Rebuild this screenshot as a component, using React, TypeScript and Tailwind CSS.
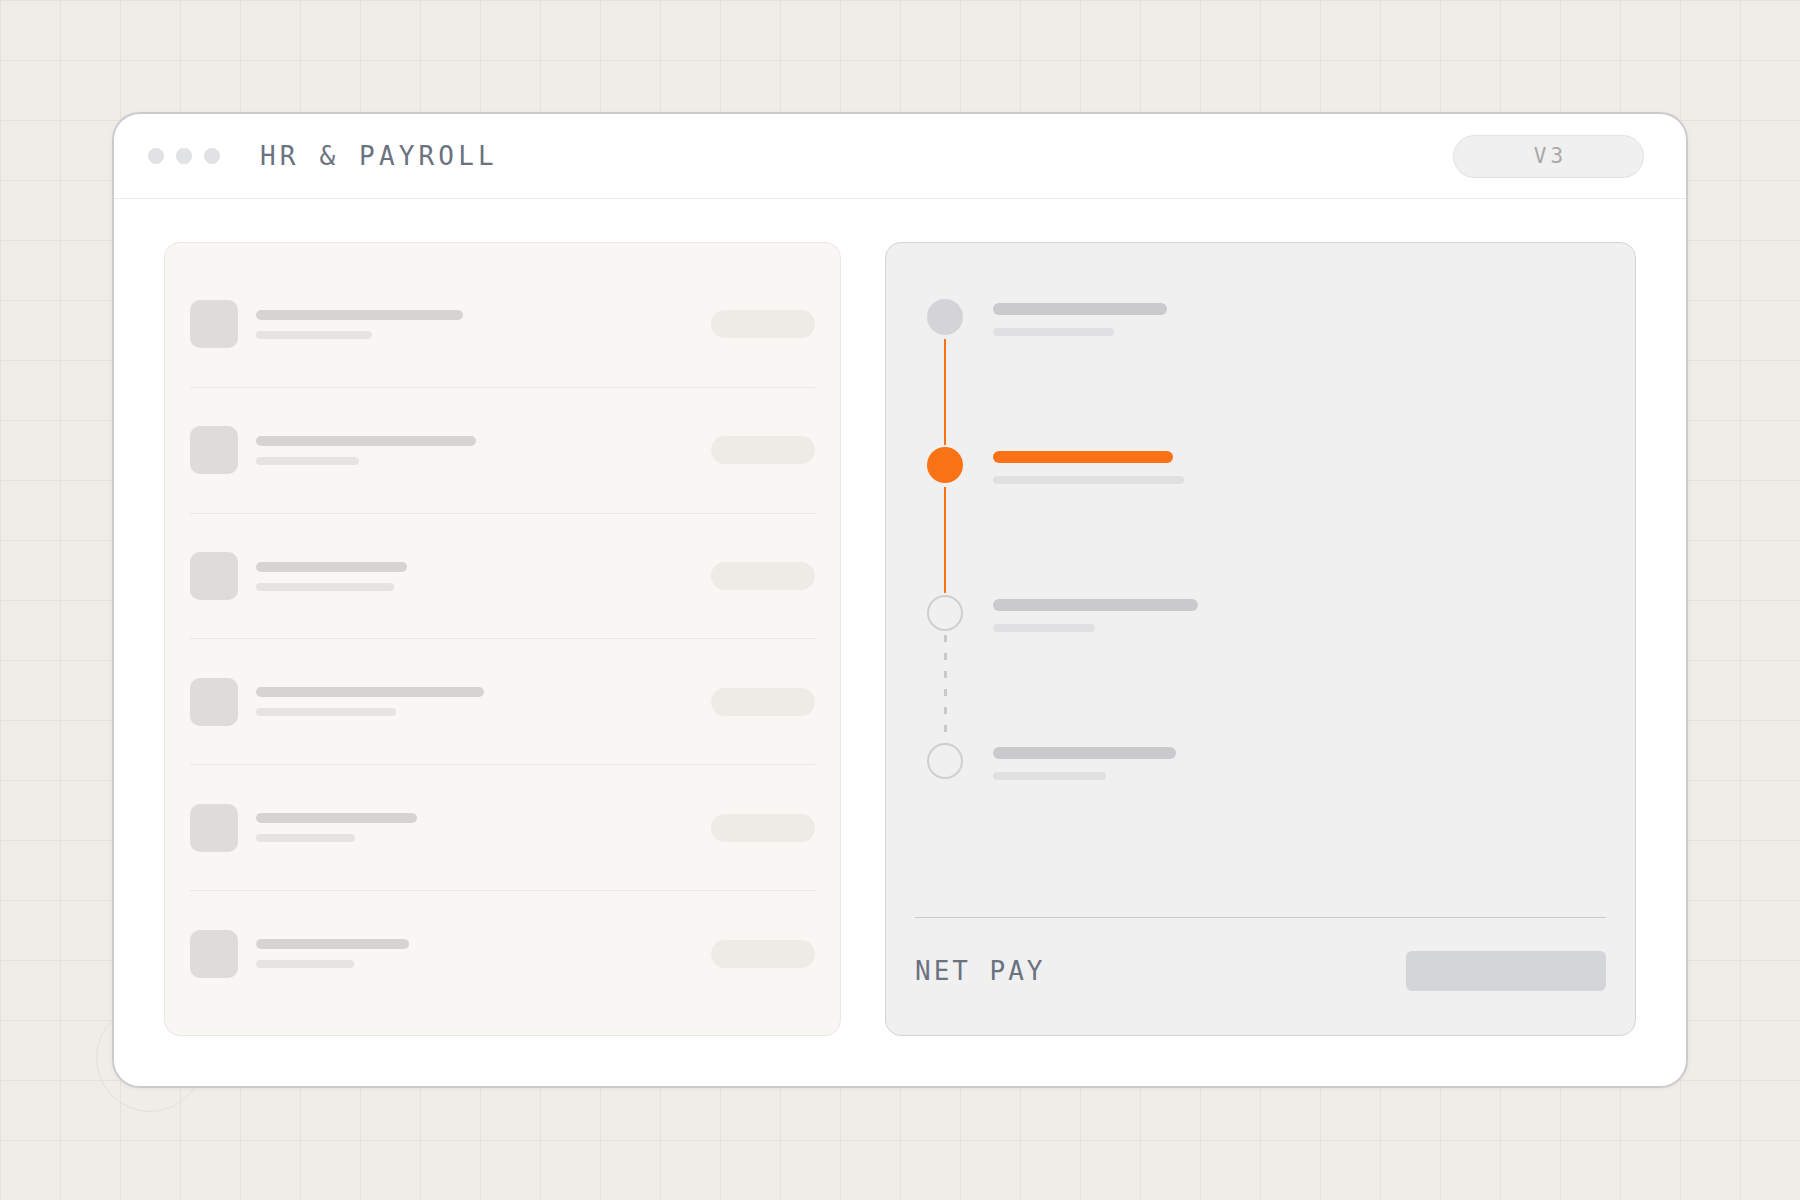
const rows = [
  { name: 207, sub: 116 },
  { name: 220, sub: 103 },
  { name: 151, sub: 138 },
  { name: 228, sub: 140 },
  { name: 161, sub: 99 },
  { name: 153, sub: 98 },
];

const steps = [
  { state: 'done', title: 174, sub: 121 },
  { state: 'active', title: 180, sub: 191 },
  { state: 'todo', title: 205, sub: 102 },
  { state: 'todo', title: 183, sub: 113 },
];

const mono = 'font-["DejaVu_Sans_Mono","Liberation_Mono",monospace]';

export default function App() {
  return (
    <div className="relative flex h-[1200px] w-full items-center justify-center overflow-hidden bg-[#f0ede8] bg-[linear-gradient(to_right,#e5e2dc_1px,transparent_1px),linear-gradient(to_bottom,#e5e2dc_1px,transparent_1px)] bg-[size:60px_60px]">
      {/* decorative ring peeking out behind the window */}
      <div className="absolute left-[96px] top-[1004px] h-[108px] w-[108px] rounded-full border-[1.5px] border-[#e2dfd9]" />

      <div className="relative z-10 flex h-[976px] w-[1576px] flex-col rounded-[28px] border-2 border-[#cbcbcb] bg-white shadow-[0_1px_4px_rgba(0,0,0,0.05)]">
        {/* Title bar */}
        <div className="flex h-[85px] shrink-0 items-center border-b border-[#ececec] pl-[34px] pr-[42px]">
          <div className="flex items-center gap-3">
            <span className="h-4 w-4 rounded-full bg-[#e1e2e4]" />
            <span className="h-4 w-4 rounded-full bg-[#e1e2e4]" />
            <span className="h-4 w-4 rounded-full bg-[#e1e2e4]" />
          </div>
          <h1 className={`ml-10 ${mono} text-[26px] leading-none tracking-[0.16em] text-[#6b7280]`}>
            HR &amp; PAYROLL
          </h1>
          <div className={`ml-auto flex h-[43px] w-[191px] items-center justify-center rounded-full border border-[#e2e2e2] bg-[#f0f0f0] ${mono} text-[21px] leading-none tracking-[0.2em] text-[#a8a8a8]`}>
            <span className="pl-[0.2em]">V3</span>
          </div>
        </div>

        {/* Body */}
        <div className="flex flex-1 gap-[44px] px-[50px] pb-[50px] pt-[43px]">
          {/* Employee list */}
          <div className="flex w-[677px] flex-col rounded-2xl border border-[#ebe8e3] bg-[#f9f7f4] px-[25px] py-[19px]">
            {rows.map((r, i) => (
              <div
                key={i}
                className={`flex flex-1 items-center ${i > 0 ? 'border-t border-[#ebe8e4]' : ''}`}
              >
                <div className="h-12 w-12 rounded-[10px] bg-[#dedcd9]" />
                <div className="ml-[18px] flex flex-col gap-[11px]">
                  <div className="h-[10px] rounded-full bg-[#d5d4d1]" style={{ width: r.name }} />
                  <div className="h-2 rounded-full bg-[#e6e4e0]" style={{ width: r.sub }} />
                </div>
                <div className="ml-auto h-7 w-[104px] rounded-full bg-[#eeebe7]" />
              </div>
            ))}
          </div>

          {/* Pay run timeline */}
          <div className="flex flex-1 flex-col rounded-2xl border-[1.5px] border-[#d3d3d5] bg-[#f0f0f0]">
            <div className="flex flex-col pl-[41px] pt-[56px]">
              {steps.map((s, i) => (
                <div key={i} className="flex">
                  <div className="flex w-9 flex-col items-center">
                    {s.state === 'done' && <div className="h-9 w-9 rounded-full bg-[#d4d4d8]" />}
                    {s.state === 'active' && <div className="h-9 w-9 rounded-full bg-[#f97316]" />}
                    {s.state === 'todo' && (
                      <div className="h-9 w-9 rounded-full border-2 border-[#cfcfcf]" />
                    )}
                    {i < steps.length - 1 && (
                      <div className="flex h-[112px] justify-center pb-[2px] pt-1">
                        {i < 2 ? (
                          <div className="h-full w-[2.5px] bg-[#f97316]" />
                        ) : (
                          <div className="h-[98px] w-[3px] bg-[repeating-linear-gradient(to_bottom,#c9c9cc_0px,#c9c9cc_7px,transparent_7px,transparent_18px)]" />
                        )}
                      </div>
                    )}
                  </div>
                  <div className="ml-[30px] flex flex-col gap-[13px] pt-1">
                    <div
                      className={`h-3 rounded-full ${s.state === 'active' ? 'bg-[#f97316]' : 'bg-[#cacacd]'}`}
                      style={{ width: s.title }}
                    />
                    <div className="h-2 rounded-full bg-[#e0e0e2]" style={{ width: s.sub }} />
                  </div>
                </div>
              ))}
            </div>

            {/* Net pay */}
            <div className="mx-[29px] mt-auto flex items-center justify-between border-t-[1.5px] border-[#c9c9cd] pb-[44px] pt-[33px]">
              <span className={`${mono} text-[26px] leading-none tracking-[0.115em] text-[#6b7280]`}>NET PAY</span>
              <div className="h-10 w-[200px] rounded-md bg-[#d4d5d8]" />
            </div>
          </div>
        </div>
      </div>
    </div>
  );
}
